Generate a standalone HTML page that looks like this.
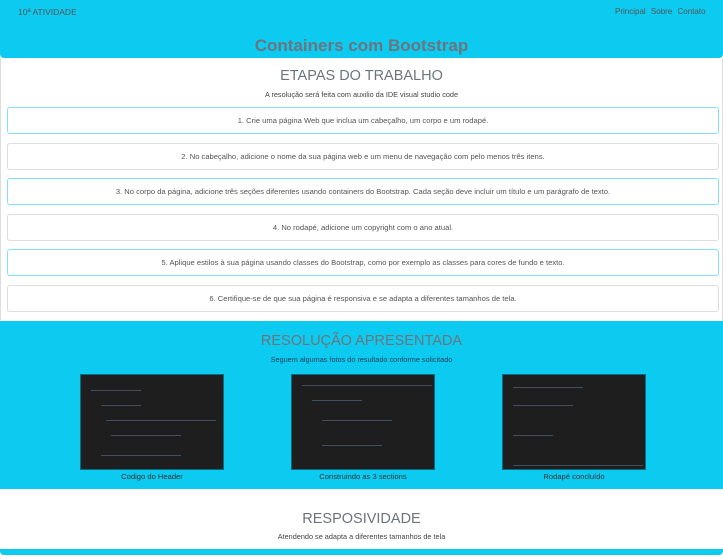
<!DOCTYPE html>
<html><head><meta charset="utf-8"><style>
*{margin:0;padding:0;box-sizing:border-box}
body{width:723px;height:559px;background:#fff;font-family:"Liberation Sans",sans-serif;color:#6c757d;overflow:hidden;position:relative}
.a{position:absolute}
.cy{background:#0dcaf0}
.c{text-align:center;width:100%;left:0}
.box{position:absolute;left:7px;width:712px;height:27px;border:1px solid #ddd;border-radius:3px;font-size:7.6px;text-align:center;line-height:25px;color:#555}
.box.b{border-color:#86e0f5}
.img{position:absolute;top:374px;width:144px;height:96px;background:#1e1e1e;border:1px solid #0a6a80}
.img i{position:absolute;height:1px;background:#5a6e8a;opacity:.6}
.cap{position:absolute;top:472px;font-size:7.6px;color:#333;width:144px;text-align:center}
</style></head><body>
<div class="a cy" style="left:0;top:0;width:723px;height:58px;border-radius:0 0 4px 4px"></div>
<div class="a" style="left:18px;top:7px;font-size:8.5px;color:#555">10ª ATIVIDADE</div>
<div class="a" style="left:615px;top:7px;font-size:8px;color:#555;word-spacing:3px">Principal Sobre Contato</div>
<div class="a c" style="top:36px;font-size:17px;font-weight:bold;color:#6c757d">Containers com Bootstrap</div>
<div class="a" style="left:0;top:58px;width:1px;height:262px;background:#ddd"></div>
<div class="a" style="left:722px;top:58px;width:1px;height:262px;background:#ddd"></div>
<div class="a c" style="top:68px;font-size:14.5px;color:#6c757d">ETAPAS DO TRABALHO</div>
<div class="a c" style="top:90px;font-size:7.3px;color:#444">A resolução será feita com auxilio da IDE visual studio code</div>
<div class="box b" style="top:107px">1. Crie uma página Web que inclua um cabeçalho, um corpo e um rodapé.</div>
<div class="box" style="top:143px">2. No cabeçalho, adicione o nome da sua página web e um menu de navegação com pelo menos três itens.</div>
<div class="box b" style="top:178px">3. No corpo da página, adicione três seções diferentes usando containers do Bootstrap. Cada seção deve incluir um título e um parágrafo de texto.</div>
<div class="box" style="top:214px">4. No rodapé, adicione um copyright com o ano atual.</div>
<div class="box b" style="top:249px">5. Aplique estilos à sua página usando classes do Bootstrap, como por exemplo as classes para cores de fundo e texto.</div>
<div class="box" style="top:285px">6. Certifique-se de que sua página é responsiva e se adapta a diferentes tamanhos de tela.</div>
<div class="a cy" style="left:0;top:321px;width:723px;height:168px"></div>
<div class="a c" style="top:333px;font-size:14.5px;color:#6c757d">RESOLUÇÃO APRESENTADA</div>
<div class="a c" style="top:355px;font-size:7.3px;color:#1a3d5a">Seguem algumas fotos do resultado conforme solicitado</div>
<div class="img" style="left:80px"><i style="left:10px;top:15px;width:50px"></i><i style="left:20px;top:30px;width:40px"></i><i style="left:25px;top:45px;width:110px"></i><i style="left:30px;top:60px;width:70px"></i><i style="left:20px;top:80px;width:80px"></i></div>
<div class="img" style="left:291px"><i style="left:10px;top:10px;width:130px"></i><i style="left:20px;top:25px;width:50px"></i><i style="left:30px;top:45px;width:70px"></i><i style="left:30px;top:70px;width:60px"></i></div>
<div class="img" style="left:502px"><i style="left:10px;top:12px;width:70px"></i><i style="left:10px;top:30px;width:60px"></i><i style="left:10px;top:60px;width:40px"></i><i style="left:10px;top:90px;width:130px"></i></div>
<div class="cap" style="left:80px">Codigo do Header</div>
<div class="cap" style="left:291px">Construindo as 3 sections</div>
<div class="cap" style="left:502px">Rodapé concluído</div>
<div class="a c" style="top:511px;font-size:14.5px;color:#6c757d">RESPOSIVIDADE</div>
<div class="a c" style="top:532px;font-size:7.3px;color:#444">Atendendo se adapta a diferentes tamanhos de tela</div>
<div class="a cy" style="left:0;top:549px;width:723px;height:6px;border-radius:0 0 4px 4px"></div>
</body></html>
